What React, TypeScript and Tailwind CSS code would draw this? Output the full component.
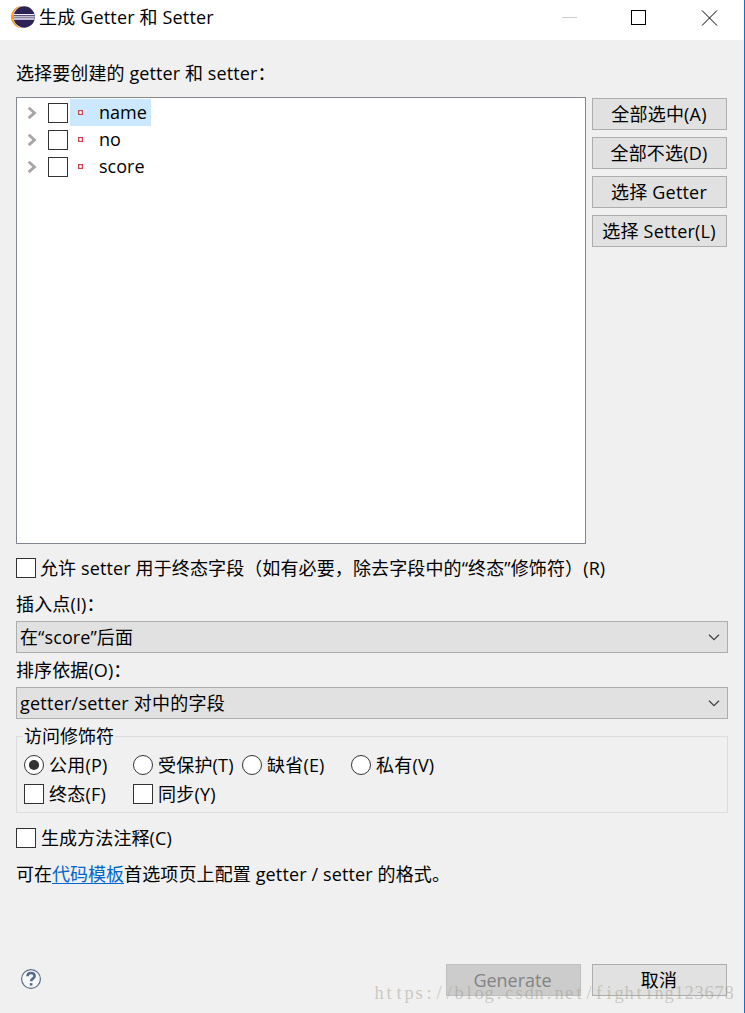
import React from 'react';

const watermark = 'https://blog.csdn.net/fighting123678';
const watermarkX = Array.from(watermark, (_, i) => 5 + i * 10).join(' ');

function Check() {
  return <span className="block size-5 shrink-0 border border-[#333333] bg-white" />;
}

function Radio({ checked = false }: { checked?: boolean }) {
  return (
    <svg className="block size-5 shrink-0" viewBox="0 0 20 20">
      <circle cx="10" cy="10" r="9.5" fill="#fff" stroke="#333" />
      {checked && <circle cx="10" cy="10" r="5.1" fill="#333" />}
    </svg>
  );
}

function PushButton({ children }: { children: React.ReactNode }) {
  return (
    <button className="flex h-8 w-[135px] items-center justify-center border border-[#adadad] bg-[#e1e1e1] pr-px tracking-[0.2px]">
      {children}
    </button>
  );
}

function Combo({ children }: { children: React.ReactNode }) {
  return (
    <div className="flex h-8 w-[712px] items-center justify-between border border-[#adadad] bg-[#e1e1e1] pl-[3px] pr-[7px]">
      {children}
      <svg className="block h-[7px] w-3" viewBox="0 0 12 7" fill="none">
        <path d="M1 0.7 6 5.7 11 0.7" stroke="#444" strokeWidth="1.3" />
      </svg>
    </div>
  );
}

function TreeRow({ name, selected = false }: { name: string; selected?: boolean }) {
  return (
    <div className="flex h-[27px] items-center pl-[10px]">
      <svg className="block h-[13px] w-[10px]" viewBox="0 0 10 13" fill="none">
        <path d="M1.700 1.700 7.500 6.900 1.700 12.100" stroke="#a6a6a6" strokeWidth="2.800" />
      </svg>
      <span className="ml-[11px] mr-[2px]">
        <Check />
      </span>
      <span className={selected ? 'flex h-[27px] items-center bg-[#cce8ff] pl-2 pr-1' : 'flex h-[27px] items-center pl-2 pr-1'}>
        <svg className="mr-4 block size-[5px]" viewBox="0 0 5 5" shapeRendering="crispEdges">
          <path d="M0 0h5v5H0z" fill="#d2434f" />
          <path d="M1 1h3v3H1z" fill="#eba5ab" />
          <path d="M2 1h1v1h1v1H3v1H2V3H1V2h1z" fill="#fff" />
        </svg>
        <span className="pb-[2px]">{name}</span>
      </span>
    </div>
  );
}

function EclipseLogo() {
  return (
    <svg className="block h-[22px] w-6" viewBox="0 0 24 22">
      <circle cx="11" cy="11" r="11" fill="#f59a2c" />
      <circle cx="13" cy="11" r="10.900" fill="#fff" />
      <circle cx="13.200" cy="11" r="10.700" fill="#2c2255" />
      <path d="M3 8.600h20.400M2.700 10.800h21M3 13h20.400" stroke="#eeeef6" strokeWidth="1.300" />
    </svg>
  );
}

export default function App() {
  return (
    <div className="relative h-[1013px] w-[745px] overflow-hidden whitespace-nowrap border-r border-[#0078d7] bg-[#f0f0f0] font-['Open_Sans','Noto_Sans_CJK_SC',sans-serif] text-[18px] leading-6 text-black">
      <header className="flex h-10 items-start bg-white pl-[11px]">
        <div className="mt-[6px]">
          <EclipseLogo />
        </div>
        <h1 className="ml-1 mt-[5px] flex-1 tracking-[0.17px]">生成 Getter 和 Setter</h1>
        <svg className="mr-[26px] mt-[10px] block h-4 w-[156px]" viewBox="0 0 156 16" fill="none">
          <path d="M0 7.5h15" stroke="#ccc" shapeRendering="crispEdges" />
          <path d="M69.5 0.5h14v14h-14z" stroke="#000" shapeRendering="crispEdges" />
          <path d="M140 0.5l15 15M155 0.5l-15 15" stroke="#000" />
        </svg>
      </header>

      <main className="px-4">
        <p className="pt-[21px] tracking-[0.1px]">选择要创建的 getter 和 setter：</p>
        <div className="mt-3 flex gap-[6px]">
          <div className="h-[447px] w-[570px] border border-[#828790] bg-white pt-px">
            <TreeRow name="name" selected />
            <TreeRow name="no" />
            <TreeRow name="score" />
          </div>
          <div className="flex flex-col gap-[7px] pt-px">
            <PushButton>全部选中(A)</PushButton>
            <PushButton>全部不选(D)</PushButton>
            <PushButton>选择 Getter</PushButton>
            <PushButton>选择 Setter(L)</PushButton>
          </div>
        </div>

        <label className="mt-3 flex h-6 items-center gap-1">
          <Check />
          <span className="tracking-[0.12px]">允许 setter 用于终态字段（如有必要，除去字段中的“终态”修饰符）(R)</span>
        </label>
        <p className="mt-3 tracking-[0.15px]">插入点(I)：</p>
        <div className="mt-[5px]">
          <Combo>
            <span className="tracking-[0.1px]">在“score”后面</span>
          </Combo>
        </div>
        <p className="mt-[5px] tracking-[0.1px]">排序依据(O)：</p>
        <div className="mt-[5px]">
          <Combo>
            <span className="tracking-[0.24px]">getter/setter 对中的字段</span>
          </Combo>
        </div>

        <fieldset className="mt-[5px] h-[89px] w-[712px] border border-[#dcdcdc] pl-[7px]">
          <legend className="-ml-px h-6 px-px">访问修饰符</legend>
          <div className="mt-[5px] grid grid-cols-[109px_109px_109px_109px] gap-y-[5px] tracking-[0.2px]">
            <label className="flex h-6 items-center gap-[5px]"><Radio checked /><span>公用(P)</span></label>
            <label className="flex h-6 items-center gap-[5px]"><Radio /><span>受保护(T)</span></label>
            <label className="flex h-6 items-center gap-[5px]"><Radio /><span>缺省(E)</span></label>
            <label className="flex h-6 items-center gap-[5px]"><Radio /><span>私有(V)</span></label>
            <label className="flex h-6 items-center gap-[5px]"><Check /><span>终态(F)</span></label>
            <label className="flex h-6 items-center gap-[5px]"><Check /><span>同步(Y)</span></label>
          </div>
        </fieldset>

        <label className="mt-[13px] flex h-6 items-center gap-[5px]">
          <Check />
          <span className="tracking-[0.1px]">生成方法注释(C)</span>
        </label>
        <p className="mt-3">
          可在<a className="text-[#0066cc] underline underline-offset-2">代码模板</a>
          <span className="tracking-[0.13px]">首选项页上配置 getter / setter 的格式。</span>
        </p>
      </main>

      <footer className="mt-[78px] flex items-center pl-[21px]">
        <svg className="mb-[2px] block size-5" viewBox="0 0 20 20" fill="none">
          <circle cx="10" cy="10" r="9.4" fill="#f7f7f7" stroke="#5c6f8d" strokeWidth="1.2" />
          <path d="M6.5 7.2C6.6 5 8 4 10 4c2.100 0 3.600 1.100 3.600 3 0 2.700-3.500 2.600-3.500 5.200" stroke="#566a8c" strokeWidth="2.600" />
          <path d="M8.800 14.100h2.600v2.500H8.800z" fill="#566a8c" />
        </svg>
        <button className="ml-[405px] flex h-8 w-[135px] items-center justify-center border border-[#bfbfbf] bg-[#cccccc] pr-[2px] text-[#838383]">
          Generate
        </button>
        <div className="ml-[11px]">
          <PushButton>取消</PushButton>
        </div>
      </footer>

      <svg className="pointer-events-none absolute left-[374px] top-[980px] h-6 w-[360px]" viewBox="0 0 360 24">
        <text
          x={watermarkX}
          y="19"
          textAnchor="middle"
          className="fill-[#a09f90]/50 font-['Liberation_Serif',serif] text-[18.5px]"
        >
          {watermark}
        </text>
      </svg>
    </div>
  );
}
